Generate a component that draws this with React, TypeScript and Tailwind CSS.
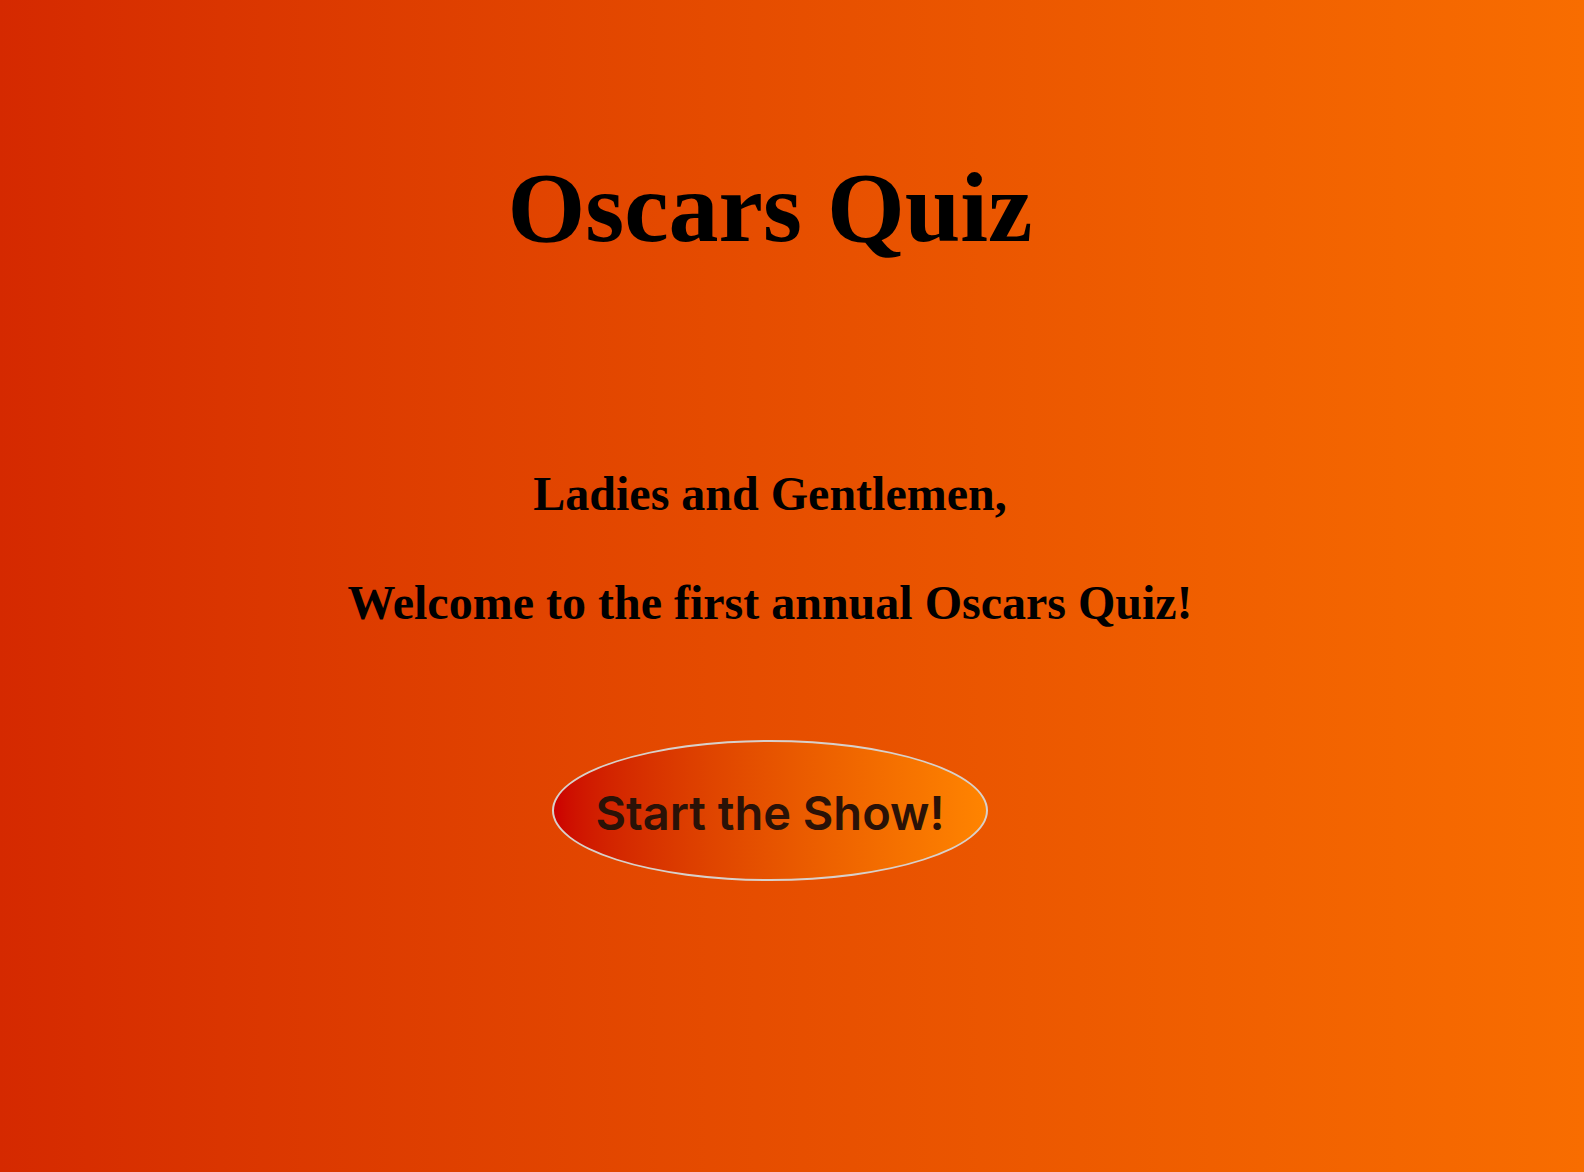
import React from "react";

function App() {
  const serif = "font-['Liberation_Serif','Times_New_Roman',serif] font-bold text-black";
  return (
    <div className="w-full h-[1172px] bg-gradient-to-r from-[#d52900] to-[#f86d00] flex flex-col items-center overflow-hidden pr-[44px]">
      <h1 className={`${serif} text-[100px] leading-[100px] mt-[158px]`}>Oscars Quiz</h1>
      <h2 className={`${serif} text-[48px] leading-[48px] mt-[212px]`}>Ladies and Gentlemen,</h2>
      <h2 className={`${serif} text-[48px] leading-[48px] mt-[61px]`}>
        Welcome to the first annual Oscars Quiz!
      </h2>
      <button className="mt-[113px] w-[436px] h-[141px] rounded-[50%] border-2 border-[#d8d0ca] bg-gradient-to-r from-[#cc0000] to-[#ff8400] font-['Inter','Liberation_Sans',sans-serif] font-semibold text-[47px] leading-none pt-[4px] text-[#2a1207] cursor-pointer">
        Start the Show!
      </button>
    </div>
  );
}

export default App;
